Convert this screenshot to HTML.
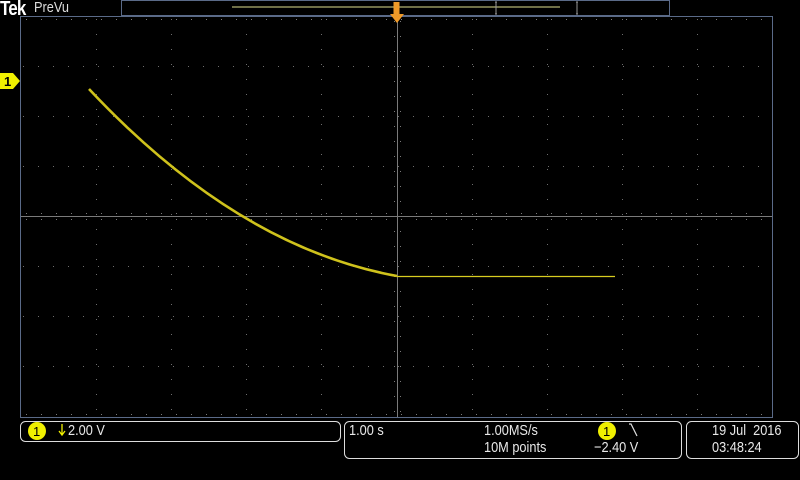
<!DOCTYPE html>
<html><head><style>
body{margin:0;background:#000;width:800px;height:480px;overflow:hidden;font-family:"Liberation Sans",sans-serif;}
.t{position:absolute;color:#e8e8e8;font-size:13px;line-height:14px;transform:scaleX(0.85);transform-origin:left top;white-space:nowrap}
</style></head><body>
<svg width="800" height="480" style="position:absolute;left:0;top:0">
<!-- top preview bar -->
<rect x="121.5" y="0.5" width="548" height="15" fill="#000" stroke="#5a6a88"/>
<line x1="232" y1="7" x2="560" y2="7" stroke="#e0e090" stroke-width="1"/>
<path d="M496 2 v12 M495 2 h2 M495 14 h2" stroke="#999" fill="none"/>
<path d="M577 2 v12 M576 2 h2 M576 14 h2" stroke="#999" fill="none"/>
<!-- graticule -->
<rect x="20.5" y="16.5" width="752" height="401" fill="none" stroke="#5a6a88"/>
<g stroke="#6e6e6e" stroke-width="1" stroke-dasharray="1,14" stroke-dashoffset="-2">
<line x1="96.5" y1="17" x2="96.5" y2="417"/><line x1="171.5" y1="17" x2="171.5" y2="417"/>
<line x1="246.5" y1="17" x2="246.5" y2="417"/><line x1="321.5" y1="17" x2="321.5" y2="417"/>
<line x1="472.5" y1="17" x2="472.5" y2="417"/><line x1="547.5" y1="17" x2="547.5" y2="417"/>
<line x1="622.5" y1="17" x2="622.5" y2="417"/><line x1="697.5" y1="17" x2="697.5" y2="417"/>
<line x1="21" y1="66.5" x2="772" y2="66.5"/><line x1="21" y1="116.5" x2="772" y2="116.5"/>
<line x1="21" y1="166.5" x2="772" y2="166.5"/><line x1="21" y1="266.5" x2="772" y2="266.5"/>
<line x1="21" y1="316.5" x2="772" y2="316.5"/><line x1="21" y1="366.5" x2="772" y2="366.5"/>
</g>
<g stroke="#7a7a7a" stroke-width="1">
<line x1="397.5" y1="17" x2="397.5" y2="417"/>
<line x1="21" y1="216.5" x2="772" y2="216.5"/>
</g>
<g stroke="#7a7a7a" stroke-width="1" stroke-dasharray="1,14">
<line x1="21" y1="213.5" x2="772" y2="213.5" stroke-dashoffset="-5"/>
<line x1="21" y1="219.5" x2="772" y2="219.5" stroke-dashoffset="-5"/>
<line x1="394.5" y1="17" x2="394.5" y2="417" stroke-dashoffset="-4"/>
<line x1="400.5" y1="17" x2="400.5" y2="417" stroke-dashoffset="-4"/>
<line x1="21" y1="19.5" x2="772" y2="19.5" stroke-dashoffset="-5"/>
<line x1="21" y1="414.5" x2="772" y2="414.5" stroke-dashoffset="-5"/>
</g>
<!-- trace -->
<path d="M89 89 Q237 247 397 276" stroke="#cfc21c" stroke-width="2.6" fill="none"/>
<line x1="397" y1="276.5" x2="615" y2="276.5" stroke="#d8cc20" stroke-width="1.2"/>
<!-- trigger marker -->
<rect x="393.5" y="2" width="6" height="14" fill="#f09a28"/>
<path d="M390 14 h14 l-7 9 z" fill="#f09a28"/>
<!-- ch1 marker -->
<path d="M0 73 h13 l7 8 l-7 8 h-13 z" fill="#f0f000"/>
<text x="4" y="86" font-size="13" font-weight="bold" fill="#000" font-family="Liberation Sans">1</text>
<!-- bottom boxes -->
<rect x="20.5" y="421.5" width="320" height="20" rx="5" fill="none" stroke="#ddd"/>
<rect x="344.5" y="421.5" width="337" height="37" rx="5" fill="none" stroke="#ddd"/>
<rect x="686.5" y="421.5" width="112" height="37" rx="5" fill="none" stroke="#ddd"/>
<circle cx="37" cy="431" r="9" fill="#f0f000"/>
<circle cx="607" cy="431" r="9" fill="#f0f000"/>
<text x="33" y="436" font-size="13" fill="#000" font-family="Liberation Sans">1</text>
<text x="603" y="436" font-size="13" fill="#000" font-family="Liberation Sans">1</text>
<path d="M62 424 v10 M59 431 l3 4 l3 -4" stroke="#f0f000" fill="none" stroke-width="1.3"/>
<path d="M629 424 l2 0 l6 12" stroke="#ddd" fill="none" stroke-width="1.2"/>
</svg>
<div class="t" style="left:0;top:-1px;font-size:20px;line-height:20px;font-weight:bold;color:#fff;letter-spacing:-1px">Tek</div>
<div class="t" style="left:34px;top:1px;font-size:15px;color:#ddd">PreVu</div>
<div class="t" style="left:68px;top:424px;font-size:15px">2.00 V</div>
<div class="t" style="left:349px;top:424px;font-size:15px">1.00 s</div>
<div class="t" style="left:484px;top:424px;font-size:15px">1.00MS/s</div>
<div class="t" style="left:484px;top:441px;font-size:15px">10M points</div>
<div class="t" style="left:594px;top:441px;font-size:15px">−2.40 V</div>
<div class="t" style="left:712px;top:424px;font-size:15px">19 Jul&nbsp;&nbsp;2016</div>
<div class="t" style="left:712px;top:441px;font-size:15px">03:48:24</div>
</body></html>
